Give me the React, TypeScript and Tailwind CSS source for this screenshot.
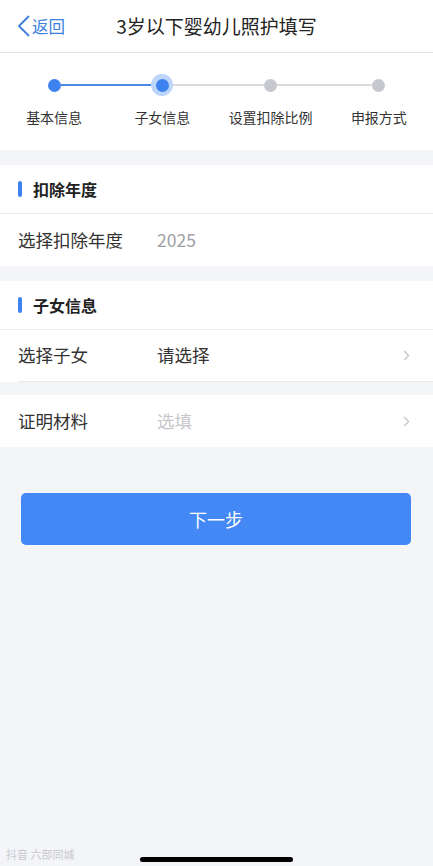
import { ChevronRight } from "lucide-react";

const font = { fontFamily: '"Noto Sans CJK SC", "Noto Sans", sans-serif' };

const steps = [
  { label: "基本信息", left: "", right: "bg-[#4a87e8]", state: "done" },
  { label: "子女信息", left: "bg-[#4a87e8]", right: "bg-[#d9dae0]", state: "active" },
  { label: "设置扣除比例", left: "bg-[#d9dae0]", right: "bg-[#d9dae0]", state: "todo" },
  { label: "申报方式", left: "bg-[#d9dae0]", right: "", state: "todo" },
];

function Step({ label, left, right, state }: { label: string; left: string; right: string; state: string }) {
  return (
    <div className="flex flex-col items-center">
      <div className="flex h-[22px] w-full items-center">
        <div className={`h-[1.5px] flex-1 ${left}`} />
        {state === "active" ? (
          <div className="flex h-[22px] w-[22px] items-center justify-center rounded-full bg-[#bcd5fb]">
            <div className="h-[13px] w-[13px] rounded-full bg-[#3d82ee]" />
          </div>
        ) : (
          <div
            className={`h-[13px] w-[13px] rounded-full ${
              state === "done" ? "bg-[#3d82ee]" : "bg-[#c6c7cf]"
            }`}
          />
        )}
        <div className={`h-[1.5px] flex-1 ${right}`} />
      </div>
      <div className="mt-[11px] text-[14px] leading-[20px] text-[#333]">{label}</div>
    </div>
  );
}

function SectionTitle({ title }: { title: string }) {
  return (
    <div className="flex h-[49px] items-center border-b border-[#ebebeb] pl-[18px]">
      <div className="h-[16px] w-[4px] rounded-full bg-[#3d82ee]" />
      <div className="ml-[11px] text-[16px] font-bold text-[#222]">{title}</div>
    </div>
  );
}

function Row({
  label,
  value,
  valueClass,
  arrow,
  inset,
}: {
  label: string;
  value: string;
  valueClass: string;
  arrow?: boolean;
  inset?: boolean;
}) {
  return (
    <div className="bg-white pl-[18px]">
      <div className={`flex h-[52px] items-center pr-[18px] ${inset ? "border-b border-[#e8e8e8]" : ""}`}>
        <div className="w-[139px] text-[17.5px] text-[#333]">{label}</div>
        <div className={`flex-1 text-[17.5px] ${valueClass}`}>{value}</div>
        {arrow && <ChevronRight size={17} strokeWidth={1.6} className="text-[#c4c4c8]" />}
      </div>
    </div>
  );
}

export default function App() {
  return (
    <div className="relative flex min-h-[866px] flex-col bg-[#f4f5f9]" style={font}>
      <header className="grid h-[53px] grid-cols-[1fr_auto_1fr] items-center border-b border-[#e3e3e3] bg-white">
        <div className="flex items-center pl-[17px] text-[16.5px] text-[#3d7fe0]">
          <svg width="13" height="22" viewBox="0 0 13 22" className="mr-[2px]">
            <polyline points="11.5,1.5 2,11 11.5,20.5" fill="none" stroke="#3d7fe0" strokeWidth="1.8" strokeLinecap="round" strokeLinejoin="round" />
          </svg>
          <span>返回</span>
        </div>
        <div className="text-[19px] text-[#222]">3岁以下婴幼儿照护填写</div>
        <div />
      </header>

      <div className="grid h-[97px] grid-cols-4 bg-white pt-[21px]">
        {steps.map((s) => (
          <Step key={s.label} {...s} />
        ))}
      </div>

      <div className="mt-[15px] bg-white">
        <SectionTitle title="扣除年度" />
        <Row label="选择扣除年度" value="2025" valueClass="text-[#a0a0a4]" />
      </div>

      <div className="mt-[15px] bg-white">
        <SectionTitle title="子女信息" />
        <Row label="选择子女" value="请选择" valueClass="text-[#333]" arrow inset />
      </div>

      <div className="mt-[13px]">
        <Row label="证明材料" value="选填" valueClass="text-[#c6c6ca]" arrow />
      </div>

      <div className="mt-[46px] px-[21px] pr-[22px]">
        <button className="flex h-[52px] w-full items-center justify-center rounded-[5px] bg-[#4388f4] text-[18px] text-white">
          下一步
        </button>
      </div>

      <div className="flex-1" />

      <div className="relative flex h-[30px] items-start justify-center">
        <div className="mt-[21px] h-[5px] w-[153px] rounded-full bg-black" />
        <div className="absolute bottom-[4px] left-[6px] text-[11px] text-[#c9c9cc]">抖音 六部同城</div>
      </div>
    </div>
  );
}
